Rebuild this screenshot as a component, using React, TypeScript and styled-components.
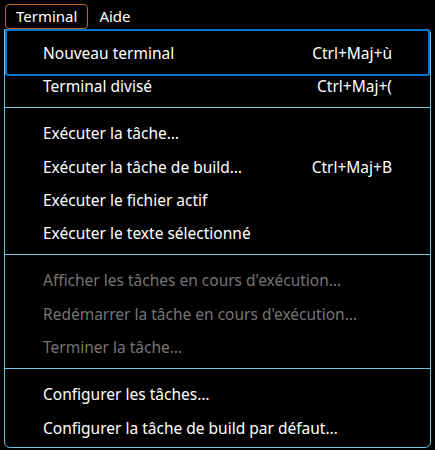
import React from 'react';
import styled, { createGlobalStyle } from 'styled-components';

const GlobalStyle = createGlobalStyle`
  html, body {
    margin: 0;
    padding: 0;
    background: #000;
  }
  body {
    font-family: 'Noto Sans', 'Open Sans', sans-serif;
    color: #fff;
  }
`;

const Screen = styled.div`
  width: 435px;
  height: 450px;
  background: #000;
  overflow: hidden;
`;

const MenuBar = styled.div`
  display: flex;
  align-items: center;
  height: 29px;
  padding-left: 5px;
`;

const BarItem = styled.div<{ $open?: boolean }>`
  height: 25px;
  margin-top: 3px;
  box-sizing: border-box;
  display: flex;
  align-items: center;
  padding: 0 10px;
  font-size: 15px;
  color: #fff;
  border: 1px solid ${(p) => (p.$open ? '#b8681c' : 'transparent')};
  border-radius: 4px;
`;

const Menu = styled.div`
  margin-left: 4px;
  width: 427px;
  box-sizing: border-box;
  border: 1px solid #6fc3df;
  border-radius: 0 4px 6px 6px;
  padding: 6px 0 3px;
`;

const Item = styled.div<{ $disabled?: boolean; $focused?: boolean }>`
  position: relative;
  display: flex;
  align-items: center;
  height: 33.3px;
  padding: 0 38px 0 38px;
  font-size: 15.5px;
  color: ${(p) => (p.$disabled ? '#757575' : '#fff')};

  &::before {
    content: '';
    display: ${(p) => (p.$focused ? 'block' : 'none')};
    position: absolute;
    top: -7px;
    bottom: -7px;
    left: 0;
    right: 0;
    border: 2px solid #0078d4;
    border-radius: 3px;
  }
`;

const Label = styled.span`
  flex: 1;
`;

const Keys = styled.span`
  white-space: nowrap;
`;

const Separator = styled.div`
  height: 1px;
  background: #6fc3df;
  margin: 4.5px 0 8.5px;
`;

type Entry = { label: string; keys?: string; disabled?: boolean; focused?: boolean };

const GROUPS: Entry[][] = [
  [
    { label: 'Nouveau terminal', keys: 'Ctrl+Maj+ù', focused: true },
    { label: 'Terminal divisé', keys: 'Ctrl+Maj+(' },
  ],
  [
    { label: 'Exécuter la tâche…' },
    { label: 'Exécuter la tâche de build…', keys: 'Ctrl+Maj+B' },
    { label: 'Exécuter le fichier actif' },
    { label: 'Exécuter le texte sélectionné' },
  ],
  [
    { label: "Afficher les tâches en cours d'exécution…", disabled: true },
    { label: "Redémarrer la tâche en cours d'exécution…", disabled: true },
    { label: 'Terminer la tâche…', disabled: true },
  ],
  [
    { label: 'Configurer les tâches…' },
    { label: 'Configurer la tâche de build par défaut…' },
  ],
];

const App: React.FC = () => {
  return (
    <Screen>
      <GlobalStyle />
      <MenuBar>
        <BarItem $open>Terminal</BarItem>
        <BarItem>Aide</BarItem>
      </MenuBar>
      <Menu>
        {GROUPS.map((group, gi) => (
          <React.Fragment key={gi}>
            {gi > 0 && <Separator />}
            {group.map((e) => (
              <Item key={e.label} $disabled={e.disabled} $focused={e.focused}>
                <Label>{e.label}</Label>
                {e.keys && <Keys>{e.keys}</Keys>}
              </Item>
            ))}
          </React.Fragment>
        ))}
      </Menu>
    </Screen>
  );
};

export default App;
